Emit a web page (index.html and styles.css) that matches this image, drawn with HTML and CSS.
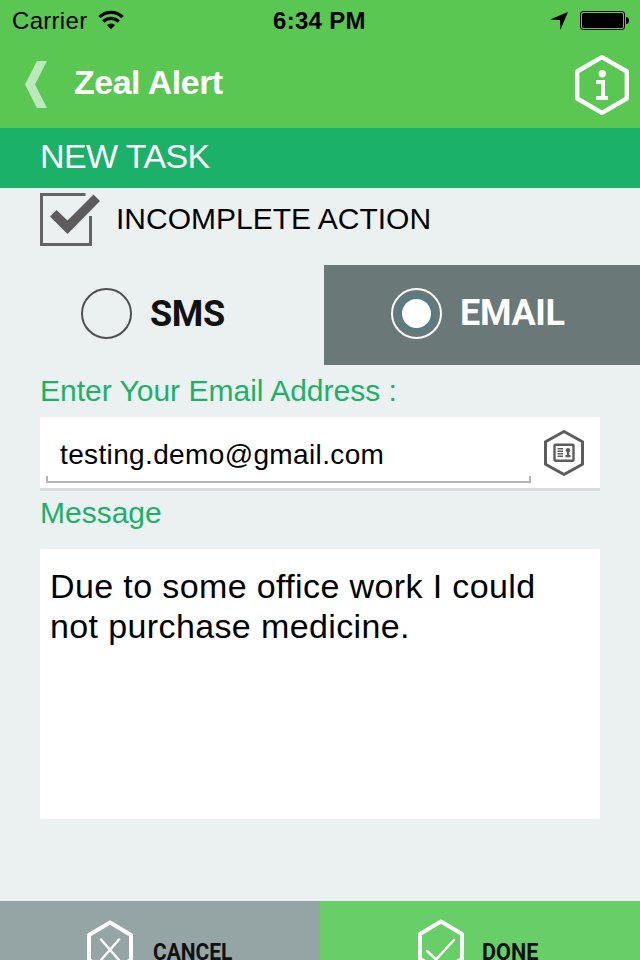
FILE: index.html
```html
<!DOCTYPE html>
<html lang="en">
<head>
  <meta charset="UTF-8">
  <meta name="viewport" content="width=device-width, initial-scale=1.0">
  <title>Zeal Alert</title>
  <link rel="stylesheet" href="styles.css">
</head>
<body>
  <header>
    <div class="status">
      <span class="carrier">Carrier</span>
      <svg class="wifi" width="26" height="20" viewBox="0 0 26 20">
        <g fill="none" stroke="#000" stroke-width="3.2">
          <path d="M1.4 7.2a16.500 16.500 0 0 1 23.200 0"/>
          <path d="M5.300 11.600a11 11 0 0 1 15.400 0"/>
        </g>
        <path d="M8.900 15.100a6 6 0 0 1 8.200 0L13 19.200z"/>
      </svg>
      <span class="time">6:34 PM</span>
      <svg class="location" width="18" height="18" viewBox="0 0 18 18">
        <path d="M18 0L10.400 18 10 8 0 7.600z"/>
      </svg>
      <svg class="battery" width="49" height="19" viewBox="0 0 49 19">
        <rect x=".5" y=".5" width="44" height="18" rx="2.5" fill="none" stroke="#000"/>
        <rect x="2" y="2" width="41" height="15" rx="1.5"/>
        <path d="M46 6q3 0 3 3.5T46 13z"/>
      </svg>
    </div>
    <div class="nav">
      <svg class="back" width="22" height="47" viewBox="0 0 22 47">
        <path d="M12 0h10L10 23.5 22 47H12L0 23.5z" fill="#bce9bb"/>
      </svg>
      <h1>Zeal Alert</h1>
      <svg class="info" width="54" height="60" viewBox="0 0 54 60" fill="none" stroke="#fff">
        <path d="M27 2.200L51.800 16.500V43.500L27 57.800 2.200 43.500V16.500z" stroke-width="4.400" stroke-linejoin="round"/>
        <path d="M21 25h9V41h3v4H21v-4h5v-12H21z" fill="#fff" stroke="none"/>
        <circle cx="27.300" cy="18.700" r="3.700" fill="#fff" stroke="none"/>
      </svg>
    </div>
  </header>
  <h2>NEW TASK</h2>
  <div class="incomplete">
    <svg width="60" height="54" viewBox="0 0 60 54">
      <path d="M45.500 1.500H1.500V51.500H50.500V23" fill="none" stroke="#636363" stroke-width="3"/>
      <path d="M10 23.500L16.500 17 27.500 27.500 53.500 1.500 60 8 27.500 41z" fill="#5c5c5c"/>
    </svg>
    <span>INCOMPLETE ACTION</span>
  </div>
  <div class="types">
    <div class="type sms"><i class="radio"></i><b>SMS</b></div>
    <div class="type email selected"><i class="radio"></i><b>EMAIL</b></div>
  </div>
  <main>
    <label class="email-label">Enter Your Email Address :</label>
    <div class="address">
      <div class="input"><span>testing.demo@gmail.com</span></div>
      <svg class="contact" width="42" height="46" viewBox="0 0 42 46" fill="none" stroke="#5c5c5c">
        <path d="M21 1.500L39.500 11.800V34.200L21 44.500 2.500 34.200V11.800z" stroke-width="3" stroke-linejoin="round"/>
        <rect x="11.500" y="14.800" width="19" height="16" rx="1" stroke-width="2.400"/>
        <path d="M14.500 18.700h5.500M14.500 21.200h5.500M14.500 23.700h5.500M14.500 26.200h5.500" stroke-width="1.600"/>
        <circle cx="25" cy="20.300" r="2.200" fill="#5c5c5c" stroke="none"/>
        <path d="M25 21v5M22.500 26.200h5" stroke-width="2.200"/>
      </svg>
    </div>
    <label class="message-label">Message</label>
    <div class="message">Due to some office work I could<br><span>not purchase medicine.</span></div>
  </main>
  <footer>
    <div class="action cancel">
      <svg width="48" height="54" viewBox="0 0 48 54" fill="none" stroke="#fff" stroke-linejoin="round" stroke-linecap="round">
        <path d="M24 2.500L45 15V40L24 52 3 40V15z" stroke-width="4"/>
        <path d="M15 19.500L33 40M33 19.500L15 40" stroke-width="2.500"/>
      </svg>
      <b>CANCEL</b>
    </div>
    <div class="action done">
      <svg width="48" height="54" viewBox="0 0 48 54" fill="none" stroke="#fff" stroke-linejoin="round" stroke-linecap="round">
        <path d="M24 2.500L45 15V40L24 52 3 40V15z" stroke-width="4"/>
        <path d="M10 32L19 40.500 37 21" stroke-width="2.500"/>
      </svg>
      <b>DONE</b>
    </div>
  </footer>
</body>
</html>
```

FILE: styles.css
```css
* {
  box-sizing: border-box;
}
body {
  margin: 0;
  height: 960px;
  overflow: hidden;
  background: #ebf1f1;
  font-family: "Liberation Sans", Arial, sans-serif;
  color: #000;
}
svg {
  display: block;
  flex: none;
}
span, b, h1, h2, label {
  white-space: nowrap;
}
header {
  height: 128px;
  background: #5ac752;
}
.status {
  display: flex;
  height: 40px;
  padding: 0 11px 0 12px;
  font-size: 24px;
  line-height: 42px;
}
.carrier {
  width: 75px;
  letter-spacing: 0.3px;
}
.wifi {
  margin: 10px 0 0 11px;
}
.time {
  width: 100px;
  margin-left: 149px;
  font-weight: bold;
  letter-spacing: 0.3px;
}
.location {
  margin: 12px 0 0 auto;
}
.battery {
  margin: 11px 0 0 12px;
}
.nav {
  display: flex;
  height: 88px;
  padding: 0 11px 0 25px;
}
.back {
  margin-top: 21px;
}
h1 {
  margin: 0 0 0 27px;
  font-size: 34px;
  line-height: 85px;
  letter-spacing: -0.5px;
  color: #fff;
}
.info {
  margin: 15px 0 0 auto;
}
h2 {
  margin: 0;
  height: 60px;
  padding-left: 40px;
  background: #1bb169;
  font-size: 34px;
  font-weight: normal;
  line-height: 57px;
  letter-spacing: -0.6px;
  color: #fff;
}
.incomplete {
  display: flex;
  gap: 16px;
  height: 77px;
  padding: 5px 0 0 40px;
  font-size: 30px;
  line-height: 52px;
}
.types {
  display: flex;
  height: 100px;
  font-family: Roboto, sans-serif;
  font-size: 36px;
}
.type {
  display: flex;
  width: 324px;
  padding: 23px 0 0 81px;
  line-height: 52px;
  letter-spacing: -0.3px;
  color: #111;
}
.type b {
  margin-left: 18px;
}
.selected {
  width: 316px;
  padding-left: 67px;
  background: #6b7878;
  color: #fff;
}
.selected b {
  line-height: 50px;
}
.radio {
  width: 51px;
  height: 51px;
  padding: 9px;
  border: 2px solid #505050;
  border-radius: 50%;
}
.selected .radio {
  border-color: #fff;
}
.selected .radio::before {
  content: "";
  display: block;
  width: 29px;
  height: 29px;
  border-radius: 50%;
  background: #fff;
  box-shadow: 0 0 8px 1px #36829b;
}
main {
  padding: 0 40px;
}
label {
  display: block;
  font-size: 30px;
  color: #1bb169;
}
.email-label {
  height: 52px;
  line-height: 52px;
}
.address {
  display: flex;
  height: 74px;
  padding-left: 6px;
  background: #fff;
  border-bottom: 3px solid #d7dddd;
}
.input {
  width: 485px;
  height: 66px;
  padding-left: 14px;
  background: linear-gradient(#b5b5b5, #b5b5b5) left bottom / 2px 5px no-repeat, linear-gradient(#b5b5b5, #b5b5b5) right bottom / 2px 5px no-repeat;
  border-bottom: 2px solid #b5b5b5;
  font-size: 28px;
  line-height: 75px;
  letter-spacing: 0.36px;
}
.contact {
  margin: 13px 0 0 12px;
}
.message-label {
  height: 58px;
  line-height: 44px;
}
.message {
  height: 270px;
  padding: 17px 10px;
  background: #fff;
  font-size: 34px;
  line-height: 40px;
  letter-spacing: 0.38px;
}
footer {
  display: flex;
  height: 100px;
  margin-top: 82px;
  font-family: Roboto, sans-serif;
  font-size: 23px;
}
.action {
  display: flex;
  width: 320px;
  padding: 19px 0 0 86px;
  background: #95a5a5;
  line-height: 65px;
  color: #111;
}
.action b {
  margin-left: 19px;
  transform: scaleX(0.91);
  transform-origin: left;
}
.done {
  padding: 18px 0 0 97px;
  background: #68ce68;
}
.done b {
  margin-left: 17px;
  line-height: 67px;
  transform: scaleX(0.94);
}
```
